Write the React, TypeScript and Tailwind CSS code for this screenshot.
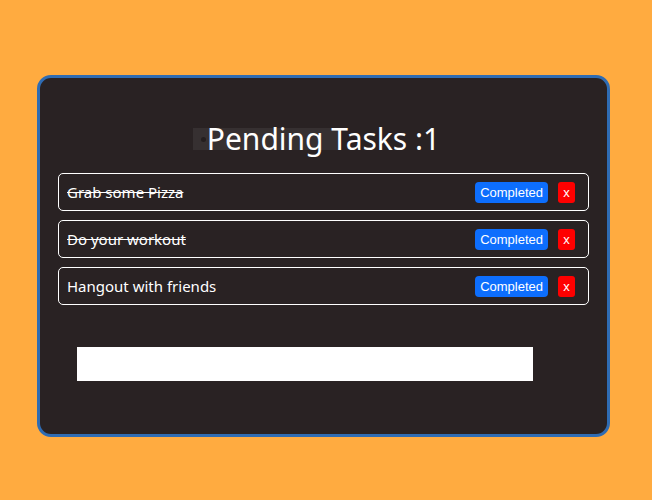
import React from "react";

const tasks = [
  { text: "Grab some Pizza", done: true },
  { text: "Do your workout", done: true },
  { text: "Hangout with friends", done: false },
];

export default function App() {
  return (
    <div className="w-[652px] h-[500px] bg-[#ffab40] pt-[75px] pl-[37px]">
      <div
        className="w-[573px] h-[362px] rounded-[14px] border-[3px] border-[#2f6cb3] bg-[#292223] px-[18px] pt-[38px] flex flex-col"
        style={{ fontFamily: '"Segoe UI", "Noto Sans", sans-serif' }}
      >
        <div className="relative flex justify-center h-[45px]">
          <div className="absolute left-[135px] top-[12px] w-[147px] h-[22px] bg-[#363031] flex items-center pl-[8px]">
            <div className="w-[5px] h-[5px] rounded-full bg-[#241e1f]" />
          </div>
          <h2 className="relative text-[30px] leading-[45px] text-white font-normal">Pending Tasks :1</h2>
        </div>
        <div className="flex flex-col gap-[9px] mt-[12px]">
          {tasks.map((t) => (
            <div
              key={t.text}
              className="h-[38px] border border-white rounded-[5px] flex items-center pl-[8px] pr-[13px]"
            >
              <span className={"text-white text-[15px] flex-1 " + (t.done ? "line-through" : "")}>{t.text}</span>
              <button
                className="h-[21px] px-[5px] rounded-[4px] bg-[#0d6efd] text-white text-[13px] leading-[21px]"
                style={{ fontFamily: '"Liberation Sans", Arial, sans-serif' }}
              >
                Completed
              </button>
              <button
                className="ml-[10px] w-[17px] h-[21px] rounded-[3px] bg-[#ff0000] text-white text-[13px] leading-[21px]"
                style={{ fontFamily: '"Liberation Sans", Arial, sans-serif' }}
              >
                x
              </button>
            </div>
          ))}
        </div>
        <input className="mt-[42px] ml-[19px] w-[456px] h-[34px] bg-white outline-none border-0" />
      </div>
    </div>
  );
}
